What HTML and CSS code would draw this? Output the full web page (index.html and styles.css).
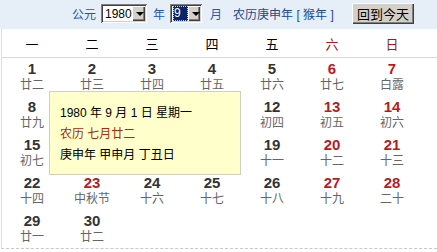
FILE: index.html
```html
<!DOCTYPE html>
<html lang="zh-CN">
<head>
<meta charset="UTF-8" />
<meta name="viewport" content="width=device-width, initial-scale=1" />
<title>万年历</title>
<link rel="stylesheet" href="styles.css">
</head>
<body>
<div class="calendar">
  <div class="toolbar">
    <span class="label">公元</span>
    <div class="select year-select">
      <span class="select-value">1980</span>
      <span class="select-arrow"></span>
    </div>
    <span class="label label-year">年</span>
    <div class="select month-select">
      <span class="select-value"><span class="picked">9</span></span>
      <span class="select-arrow"></span>
    </div>
    <span class="label label-month">月</span>
    <span class="lunar-year">农历庚申年 [ 猴年 ]</span>
    <button class="today-btn">回到今天</button>
  </div>

  <div class="grid">
    <div class="weekdays">
      <div>一</div><div>二</div><div>三</div><div>四</div><div>五</div>
      <div class="weekend">六</div><div class="weekend">日</div>
    </div>
    <div class="days">
      <div class="day"><div class="num">1</div><div class="lunar">廿二</div></div>
      <div class="day"><div class="num">2</div><div class="lunar">廿三</div></div>
      <div class="day"><div class="num">3</div><div class="lunar">廿四</div></div>
      <div class="day"><div class="num">4</div><div class="lunar">廿五</div></div>
      <div class="day"><div class="num">5</div><div class="lunar">廿六</div></div>
      <div class="day red"><div class="num">6</div><div class="lunar">廿七</div></div>
      <div class="day red"><div class="num">7</div><div class="lunar">白露</div></div>

      <div class="day"><div class="num">8</div><div class="lunar">廿九</div></div>
      <div class="day"><div class="num">9</div><div class="lunar">八月</div></div>
      <div class="day"><div class="num">10</div><div class="lunar">初二</div></div>
      <div class="day"><div class="num">11</div><div class="lunar">初三</div></div>
      <div class="day"><div class="num">12</div><div class="lunar">初四</div></div>
      <div class="day red"><div class="num">13</div><div class="lunar">初五</div></div>
      <div class="day red"><div class="num">14</div><div class="lunar">初六</div></div>

      <div class="day"><div class="num">15</div><div class="lunar">初七</div></div>
      <div class="day"><div class="num">16</div><div class="lunar">初八</div></div>
      <div class="day"><div class="num">17</div><div class="lunar">初九</div></div>
      <div class="day"><div class="num">18</div><div class="lunar">初十</div></div>
      <div class="day"><div class="num">19</div><div class="lunar">十一</div></div>
      <div class="day red"><div class="num">20</div><div class="lunar">十二</div></div>
      <div class="day red"><div class="num">21</div><div class="lunar">十三</div></div>

      <div class="day"><div class="num">22</div><div class="lunar">十四</div></div>
      <div class="day red"><div class="num">23</div><div class="lunar">中秋节</div></div>
      <div class="day"><div class="num">24</div><div class="lunar">十六</div></div>
      <div class="day"><div class="num">25</div><div class="lunar">十七</div></div>
      <div class="day"><div class="num">26</div><div class="lunar">十八</div></div>
      <div class="day red"><div class="num">27</div><div class="lunar">十九</div></div>
      <div class="day red"><div class="num">28</div><div class="lunar">二十</div></div>

      <div class="day"><div class="num">29</div><div class="lunar">廿一</div></div>
      <div class="day"><div class="num">30</div><div class="lunar">廿二</div></div>
      <div class="day"></div><div class="day"></div><div class="day"></div>
      <div class="day"></div><div class="day"></div>
    </div>
  </div>

  <!-- hover card for the day under the pointer -->
  <div class="day-tip">
    <div>1980 年 9 月 1 日 星期一</div>
    <div class="tip-lunar">农历 七月廿二</div>
    <div>庚申年 甲申月 丁丑日</div>
  </div>
</div>
</body>
</html>
```

FILE: styles.css
```css
* {
  margin: 0;
  padding: 0;
  box-sizing: border-box;
}
body {
  font-family: 'Liberation Sans', 'Noto Sans CJK SC', sans-serif;
  font-size: 12px;
  background: #fff;
  color: #000;
}
.calendar {
  position: relative;
  width: 437px;
  height: 252px;
  overflow: hidden;
}

/* top bar with year / month pickers */
.toolbar {
  display: flex;
  align-items: center;
  height: 29px;
  padding: 0 23px 2px 72px;
  background: #e6eef8;
}
.label {
  color: #2857a8;
  font-size: 12px;
}
.select {
  display: flex;
  height: 19px;
  margin-left: 5px;
  padding: 2px;
  background: #fff;
  box-shadow: inset 1px 1px #808080, inset -1px -1px #fff,
              inset 2px 2px #404040, inset -2px -2px #d4d0c8;
}
.year-select { width: 46px; }
.month-select { width: 32px; }
.label-year { margin-left: 6px; }
.label-month { margin-left: 8px; }
.select-value {
  flex: 1;
  display: flex;
  align-items: center;
  padding-left: 2px;
  font-size: 12px;
  color: #000;
}
.picked {
  display: inline-block;
  width: 15px;
  height: 15px;
  margin-left: -1px;
  line-height: 13px;
  background: #0a246a;
  color: #fff;
  border: 1px dotted #d8d890;
}
.select-arrow {
  position: relative;
  width: 16px;
  background: #d4d0c8;
  box-shadow: inset 1px 1px #fff, inset -1px -1px #404040, inset -2px -2px #808080;
}
.select-arrow::after {
  content: '';
  position: absolute;
  left: 4px;
  top: 6px;
  border-left: 4px solid transparent;
  border-right: 4px solid transparent;
  border-top: 4px solid #000;
}
.lunar-year {
  margin-left: 11px;
  color: #1f4a86;
  font-size: 12px;
}
.today-btn {
  margin-left: auto;
  width: 62px;
  height: 21px;
  font-family: 'Liberation Sans', 'Noto Sans CJK SC', sans-serif;
  font-size: 13px;
  color: #000;
  background: #d4d0c8;
  border: none;
  box-shadow: inset 1px 1px #fff, inset -1px -1px #404040, inset -2px -2px #808080;
}

/* month grid */
.grid {
  margin-left: 1px;
  border-left: 1px solid #dcdcdc;
  border-bottom: 1px dashed #c8c8c8;
}
.weekdays {
  display: grid;
  grid-template-columns: repeat(7, 60px);
  align-items: center;
  height: 29px;
  border-bottom: 1px solid #d8d8d8;
  font-size: 13px;
  text-align: center;
}
.weekdays .weekend {
  color: #99201c;
}
.days {
  display: grid;
  grid-template-columns: repeat(7, 60px);
  grid-auto-rows: 38px;
}
.day {
  padding-top: 2px;
  text-align: center;
}
.num {
  font-size: 15px;
  font-weight: bold;
  line-height: 18px;
  color: #333;
}
.day.red .num {
  color: #b71c1c;
}
.lunar {
  font-size: 12px;
  line-height: 15px;
  color: #666;
}

.day-tip {
  position: absolute;
  left: 49px;
  top: 91px;
  width: 192px;
  height: 84px;
  padding: 11px 0 0 10px;
  background: #ffffcc;
  border: 1px solid #d0d0c0;
  font-size: 12px;
  line-height: 21px;
  color: #000;
}
.tip-lunar {
  color: #a0300f;
}
```
